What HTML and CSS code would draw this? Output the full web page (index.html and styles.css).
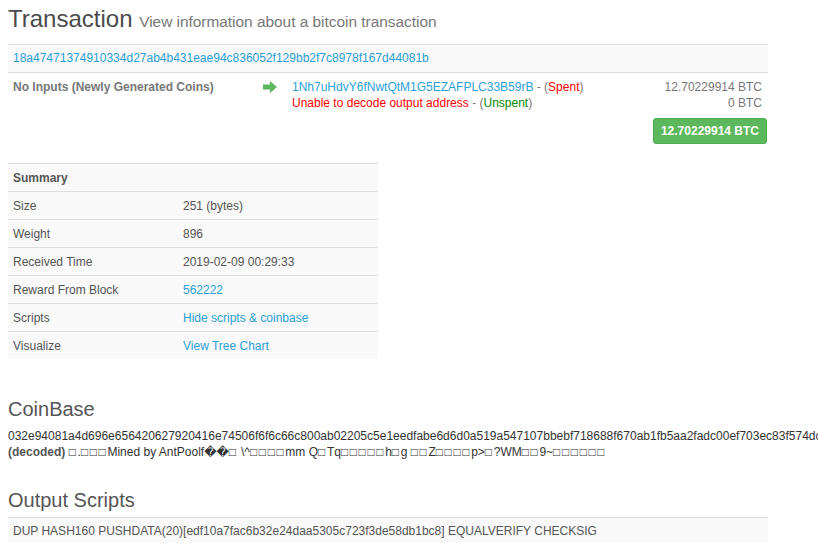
FILE: index.html
```html
<!DOCTYPE html>
<html>
<head>
<meta charset="utf-8">
<link rel="stylesheet" href="styles.css">
</head>
<body>
<div class="page">
  <h1 class="title">Transaction <small>View information about a bitcoin transaction</small></h1>

  <div class="hashbar"><a href="#">18a47471374910334d27ab4b431eae94c836052f129bb2f7c8978f167d44081b</a></div>

  <div class="io">
    <div class="inputs">No Inputs (Newly Generated Coins)</div>
    <div class="arrow">
      <svg width="14" height="12" viewBox="0 0 14 12"><path d="M0 3.5h7V0l7 6-7 6V8.5H0z" fill="#5cb85c"/></svg>
    </div>
    <div class="outputs">
      <div><a href="#">1Nh7uHdvY6fNwtQtM1G5EZAFPLC33B59rB</a> - (<span class="red">Spent</span>)</div>
      <div><span class="red">Unable to decode output address</span> - (<span class="green">Unspent</span>)</div>
    </div>
    <div class="amounts">
      <div>12.70229914 BTC</div>
      <div>0 BTC</div>
      <div class="btn">12.70229914 BTC</div>
    </div>
  </div>

  <table class="summary">
    <tr><th colspan="2">Summary</th></tr>
    <tr><td class="k">Size</td><td>251 (bytes)</td></tr>
    <tr><td class="k">Weight</td><td>896</td></tr>
    <tr><td class="k">Received Time</td><td>2019-02-09 00:29:33</td></tr>
    <tr><td class="k">Reward From Block</td><td><a href="#">562222</a></td></tr>
    <tr><td class="k">Scripts</td><td><a href="#">Hide scripts &amp; coinbase</a></td></tr>
    <tr><td class="k">Visualize</td><td><a href="#">View Tree Chart</a></td></tr>
  </table>

  <h3 class="section coinbase-h">CoinBase</h3>
  <div class="coinbase">
    <div class="hex">032e94081a4d696e656420627920416e74506f6f6c66c800ab02205c5e1eedfabe6d6d0a519a547107bbebf718688f670ab1fb5aa2fadc00ef703ec83f574dc</div>
    <div><b>(decoded)</b> <span class="nd">□</span>.<span class="nd">□□□</span>Mined by AntPoolf��<span class="nd">□</span> \^<span class="nd">□□□□</span>mm Q<span class="nd">□</span>Tq<span class="nd">□□□□□</span>h<span class="nd">□</span>g <span class="nd">□□</span>Z<span class="nd">□□□□</span>p&gt;<span class="nd">□</span>?WM<span class="nd">□□</span>9~<span class="nd">□□□□□□</span></div>
  </div>

  <h3 class="section">Output Scripts</h3>
  <div class="scriptbar">DUP HASH160 PUSHDATA(20)[edf10a7fac6b32e24daa5305c723f3de58db1bc8] EQUALVERIFY CHECKSIG</div>
</div>
</body>
</html>
```

FILE: styles.css
```css
html, body {
  margin: 0;
  padding: 0;
  background: #fff;
}
body {
  font-family: "Liberation Sans", Arial, "DejaVu Sans", sans-serif;
  font-size: 12px;
  line-height: 16px;
  color: #555;
  overflow: hidden;
}
a {
  color: #2a9fd6;
  text-decoration: none;
}
.page {
  padding: 0 8px;
  width: 760px;
}
.title {
  margin: 0;
  padding-top: 4px;
  font-weight: normal;
  font-size: 24px;
  line-height: 29px;
  color: #4a4a4a;
}
.title small {
  font-size: 15.4px;
  color: #777;
}
.hashbar {
  margin-top: 8px;
  height: 27px;
  line-height: 27px;
  padding-left: 5px;
  background: #f9f9f9;
  border-top: 1px solid #ddd;
  border-bottom: 1px solid #ddd;
}
.io {
  display: flex;
  padding: 6px 6px 0 5px;
  height: 72px;
}
.inputs {
  width: 250px;
  font-weight: bold;
  color: #777;
}
.arrow {
  width: 29px;
  padding-top: 2px;
}
.outputs {
  flex: 1;
  color: #777;
}
.red { color: #f00; }
.green { color: #080; }
.amounts {
  display: flex;
  flex-direction: column;
  align-items: flex-end;
  color: #777;
}
.btn {
  margin-top: 7px;
  margin-right: -5px;
  background: #5cb85c;
  border: 1px solid #4cae4c;
  border-radius: 3px;
  color: #fff;
  font-weight: bold;
  padding: 4px 7px;
  line-height: 16px;
}
.summary {
  margin-top: 12px;
  width: 370px;
  border-collapse: collapse;
}
.summary th, .summary td {
  background: #f9f9f9;
  border-top: 1px solid #ddd;
  height: 27px;
  padding: 0 5px;
  text-align: left;
  vertical-align: middle;
}
.summary th {
  color: #555;
}
.summary td.k {
  width: 160px;
}
.section {
  margin: 0;
  font-weight: normal;
  font-size: 20px;
  line-height: 24px;
  color: #555;
}
.coinbase-h {
  margin-top: 38px;
}
.coinbase {
  margin-top: 7px;
  white-space: nowrap;
  color: #333;
}
.coinbase b { color: #555; }
.nd { letter-spacing: 1.6px; }
.section + .scriptbar { margin-top: 5px; }
.coinbase + .section { margin-top: 28px; }
.scriptbar {
  height: 27px;
  line-height: 27px;
  padding-left: 5px;
  background: #f9f9f9;
  border-top: 1px solid #ddd;
  color: #555;
}
```
